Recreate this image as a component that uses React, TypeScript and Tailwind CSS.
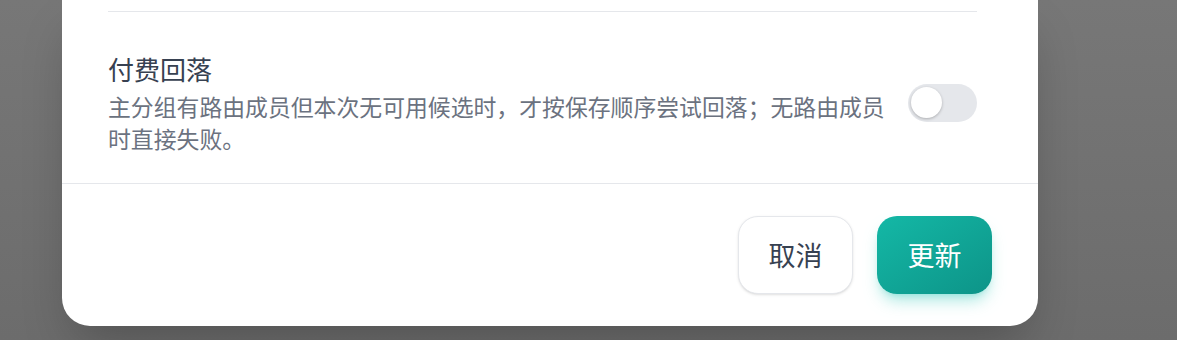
export default function App() {
  return (
    <div
      className="h-[340px] w-full overflow-hidden bg-linear-to-b from-[#777777] to-[#6c6c6c]"
      style={{ fontFamily: '"Noto Sans CJK SC", "Noto Sans", sans-serif' }}
    >
      <div className="ml-[62px] w-[976px] rounded-b-[28px] bg-white shadow-2xl">
        <div className="pl-[46px] pr-[61px] pt-[11px]">
          <div className="border-t border-[#e5e7eb]" />
          <div className="flex items-center justify-between pt-[39px] pb-[29px]">
            <div className="w-[790px]">
              <div className="text-[26px] leading-[36px] text-[#374151]">付费回落</div>
              <p className="mt-[3px] text-[22.85px] leading-[32px] text-[#6b7280]">
                主分组有路由成员但本次无可用候选时，才按保存顺序尝试回落；无路由成员时直接失败。
              </p>
            </div>
            <button
              aria-label="付费回落"
              className="flex h-[38px] w-[69px] items-center rounded-full bg-[#e5e7eb] p-[3px]"
            >
              <span className="h-[31px] w-[31px] rounded-full bg-white shadow-[0_1px_3px_rgba(0,0,0,0.25)]" />
            </button>
          </div>
        </div>
        <div className="flex justify-end gap-6 border-t border-[#e5e7eb] px-[46px] py-[32px]">
          <button className="h-[78px] w-[115px] rounded-[20px] border border-[#e5e7eb] bg-white text-[27px] text-[#374151] shadow-sm">
            取消
          </button>
          <button className="h-[78px] w-[115px] rounded-[20px] bg-linear-to-br from-[#14b8a6] to-[#0d9488] text-[27px] text-white shadow-lg shadow-teal-500/30">
            更新
          </button>
        </div>
      </div>
    </div>
  );
}
